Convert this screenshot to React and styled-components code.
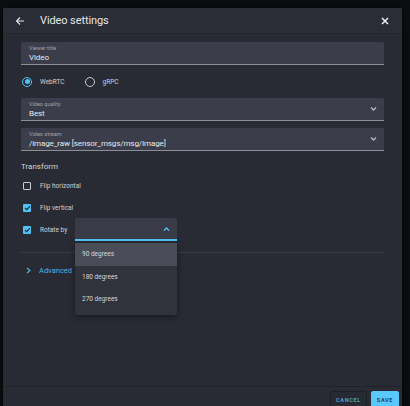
import React from "react";
import styled, { createGlobalStyle } from "styled-components";

const Global = createGlobalStyle`
  html, body { margin: 0; padding: 0; background: #0c0d10; overflow: hidden; }
  body { font-family: Roboto, "Noto Sans", Arial, sans-serif; }
  * { box-sizing: border-box; }
`;

const Page = styled.div`
  width: 410px;
  height: 406px;
  padding: 8px 8px 0 3px;
  overflow: hidden;
`;

const Dialog = styled.div`
  width: 399px;
  height: 406px;
  background: #282b33;
  display: flex;
  flex-direction: column;
  box-shadow: 0 0 6px rgba(0,0,0,0.6);
`;

const Header = styled.div`
  height: 26px;
  display: flex;
  align-items: center;
  background: #2a2d35;
  border-bottom: 1px solid #22252b;
  padding: 0 10px 0 10px;
`;

const Title = styled.div`
  flex: 1;
  margin-left: 13px;
  font-size: 11px;
  letter-spacing: -0.1px;
  color: #e4e5e8;
`;

const IconBtn = styled.span`
  display: flex;
  align-items: center;
  justify-content: center;
  width: 14px;
  height: 14px;
`;

const Body = styled.div`
  flex: 1;
  padding: 8px 18px 0 18px;
  display: flex;
  flex-direction: column;
`;

const Field = styled.div`
  position: relative;
  height: 23px;
  background: #3b3e4a;
  border-radius: 2px 2px 0 0;
  border-bottom: 1px solid #8b8e96;
  padding: 3px 8px 0 8px;
  display: flex;
  flex-direction: column;
  margin-top: ${(p) => p.$mt || 0}px;
`;

const FieldLabel = styled.div`
  font-size: 5.5px;
  line-height: 7px;
  color: #9ea1a9;
`;

const FieldValue = styled.div`
  font-size: 8px;
  line-height: 11px;
  letter-spacing: -0.1px;
  color: #e6e8eb;
`;

const Chevron = styled.span`
  position: absolute;
  right: 7px;
  top: 50%;
  transform: translateY(-50%);
  display: flex;
`;

const RadioRow = styled.div`
  display: flex;
  align-items: center;
  height: 21px;
  margin-top: 6px;
  padding-left: 1px;
`;

const RadioItem = styled.label`
  display: flex;
  align-items: center;
  margin-right: 20px;
  font-size: 6.5px;
  color: #d0d2d7;
`;

const RadioCircle = styled.span`
  width: 10px;
  height: 10px;
  border-radius: 50%;
  border: 1.3px solid ${(p) => (p.$on ? "#4fc3f7" : "#c9cbd0")};
  display: flex;
  align-items: center;
  justify-content: center;
  margin-right: 8px;
  &::after {
    content: "";
    width: 5px;
    height: 5px;
    border-radius: 50%;
    background: ${(p) => (p.$on ? "#4fc3f7" : "transparent")};
  }
`;

const Section = styled.div`
  margin-top: 10px;
  font-size: 8px;
  line-height: 12px;
  color: #d4d6db;
`;

const CheckRows = styled.div`
  margin-top: 2px;
  display: flex;
  flex-direction: column;
`;

const CheckRow = styled.div`
  height: 22px;
  display: flex;
  align-items: center;
  padding-left: 2px;
  font-size: 6.5px;
  color: #d0d2d7;
`;

const CheckLabel = styled.span`
  width: ${(p) => (p.$w ? `${p.$w}px` : "auto")};
`;

const Box = styled.span`
  width: 8px;
  height: 8px;
  border-radius: 1px;
  border: ${(p) => (p.$on ? "none" : "1.2px solid #c9cbd0")};
  background: ${(p) => (p.$on ? "#4fc3f7" : "transparent")};
  display: flex;
  align-items: center;
  justify-content: center;
  margin-right: 9px;
`;

const SelectWrap = styled.div`
  position: relative;
  width: 102px;
  margin-top: -1px;
`;

const SelectBox = styled.div`
  height: 23px;
  background: #393c47;
  border-bottom: 2px solid #4fc3f7;
  border-radius: 2px 2px 0 0;
  position: relative;
`;

const Menu = styled.div`
  position: absolute;
  top: 25px;
  left: 0;
  width: 102px;
  background: #30333c;
  border-radius: 2px;
  box-shadow: 0 2px 6px rgba(0,0,0,0.45);
  z-index: 5;
  padding-bottom: 4px;
`;

const MenuItem = styled.div`
  height: 22.5px;
  display: flex;
  align-items: center;
  padding-left: 7px;
  font-size: 6.5px;
  color: #d4d6db;
  background: ${(p) => (p.$hl ? "#4a4d58" : "transparent")};
`;

const Divider = styled.div`
  height: 1px;
  background: #3a3d46;
  margin-top: 11px;
`;

const AdvRow = styled.div`
  display: flex;
  align-items: center;
  height: 20px;
  margin-top: 7px;
  padding-left: 5px;
  font-size: 7.5px;
  color: #4fb3e0;
`;

const AdvText = styled.span`
  margin-left: 8px;
`;

const Footer = styled.div`
  height: 28px;
  border-top: 1px solid #1f2228;
  display: flex;
  justify-content: flex-end;
  align-items: flex-start;
  padding: 4px 3px 0 0;
  gap: 4px;
`;

const Button = styled.button`
  height: 20px;
  width: ${(p) => (p.$primary ? "28px" : "37px")};
  padding: 5px 0 0 0;
  border-radius: 2px;
  font-family: inherit;
  font-weight: 700;
  font-size: 5.5px;
  letter-spacing: 0.7px;
  border: 1px solid ${(p) => (p.$primary ? "#5ac8fa" : "#1d1f24")};
  background: ${(p) => (p.$primary ? "#5ac8fa" : "#272a32")};
  color: ${(p) => (p.$primary ? "#1e3e55" : "#4aa3c8")};
  display: flex;
  justify-content: center;
  align-items: flex-start;
`;

const ChevDown = ({ color = "#b9bcc3" }) => (
  <svg width="7" height="5" viewBox="0 0 7 5">
    <path d="M1 1 L3.5 3.5 L6 1" fill="none" stroke={color} strokeWidth="1.3" />
  </svg>
);

const ChevUp = () => (
  <svg width="7" height="5" viewBox="0 0 7 5">
    <path d="M1 4 L3.5 1.5 L6 4" fill="none" stroke="#4fc3f7" strokeWidth="1.3" />
  </svg>
);

const Check = () => (
  <svg width="7" height="6" viewBox="0 0 7 6">
    <path d="M1 3 L2.8 4.7 L6 1.2" fill="none" stroke="#1d2a33" strokeWidth="1.2" />
  </svg>
);

export default function App() {
  return (
    <>
      <Global />
      <Page>
        <Dialog>
          <Header>
            <IconBtn>
              <svg width="10" height="10" viewBox="0 0 10 10">
                <path d="M9 5 H1.5 M5 1.5 L1.5 5 L5 8.5" fill="none" stroke="#e6e7ea" strokeWidth="1.1" />
              </svg>
            </IconBtn>
            <Title>Video settings</Title>
            <IconBtn>
              <svg width="8" height="8" viewBox="0 0 8 8">
                <path d="M1 1 L7 7 M7 1 L1 7" fill="none" stroke="#eeeff1" strokeWidth="1.5" />
              </svg>
            </IconBtn>
          </Header>
          <Body>
            <Field>
              <FieldLabel>Viewer title</FieldLabel>
              <FieldValue>Video</FieldValue>
            </Field>
            <RadioRow>
              <RadioItem>
                <RadioCircle $on />
                WebRTC
              </RadioItem>
              <RadioItem>
                <RadioCircle />
                gRPC
              </RadioItem>
            </RadioRow>
            <Field $mt={6}>
              <FieldLabel>Video quality</FieldLabel>
              <FieldValue>Best</FieldValue>
              <Chevron><ChevDown /></Chevron>
            </Field>
            <Field $mt={7}>
              <FieldLabel>Video stream</FieldLabel>
              <FieldValue>/image_raw [sensor_msgs/msg/Image]</FieldValue>
              <Chevron><ChevDown /></Chevron>
            </Field>
            <Section>Transform</Section>
            <CheckRows>
              <CheckRow>
                <Box />
                <CheckLabel>Flip horizontal</CheckLabel>
              </CheckRow>
              <CheckRow>
                <Box $on><Check /></Box>
                <CheckLabel>Flip vertical</CheckLabel>
              </CheckRow>
              <CheckRow>
                <Box $on><Check /></Box>
                <CheckLabel $w={35}>Rotate by</CheckLabel>
                <SelectWrap>
                  <SelectBox>
                    <Chevron><ChevUp /></Chevron>
                  </SelectBox>
                  <Menu>
                    <MenuItem $hl>90 degrees</MenuItem>
                    <MenuItem>180 degrees</MenuItem>
                    <MenuItem>270 degrees</MenuItem>
                  </Menu>
                </SelectWrap>
              </CheckRow>
            </CheckRows>
            <Divider />
            <AdvRow>
              <svg width="5" height="7" viewBox="0 0 5 7">
                <path d="M1 1 L4 3.5 L1 6" fill="none" stroke="#4fb3e0" strokeWidth="1.2" />
              </svg>
              <AdvText>Advanced</AdvText>
            </AdvRow>
          </Body>
          <Footer>
            <Button>CANCEL</Button>
            <Button $primary>SAVE</Button>
          </Footer>
        </Dialog>
      </Page>
    </>
  );
}
